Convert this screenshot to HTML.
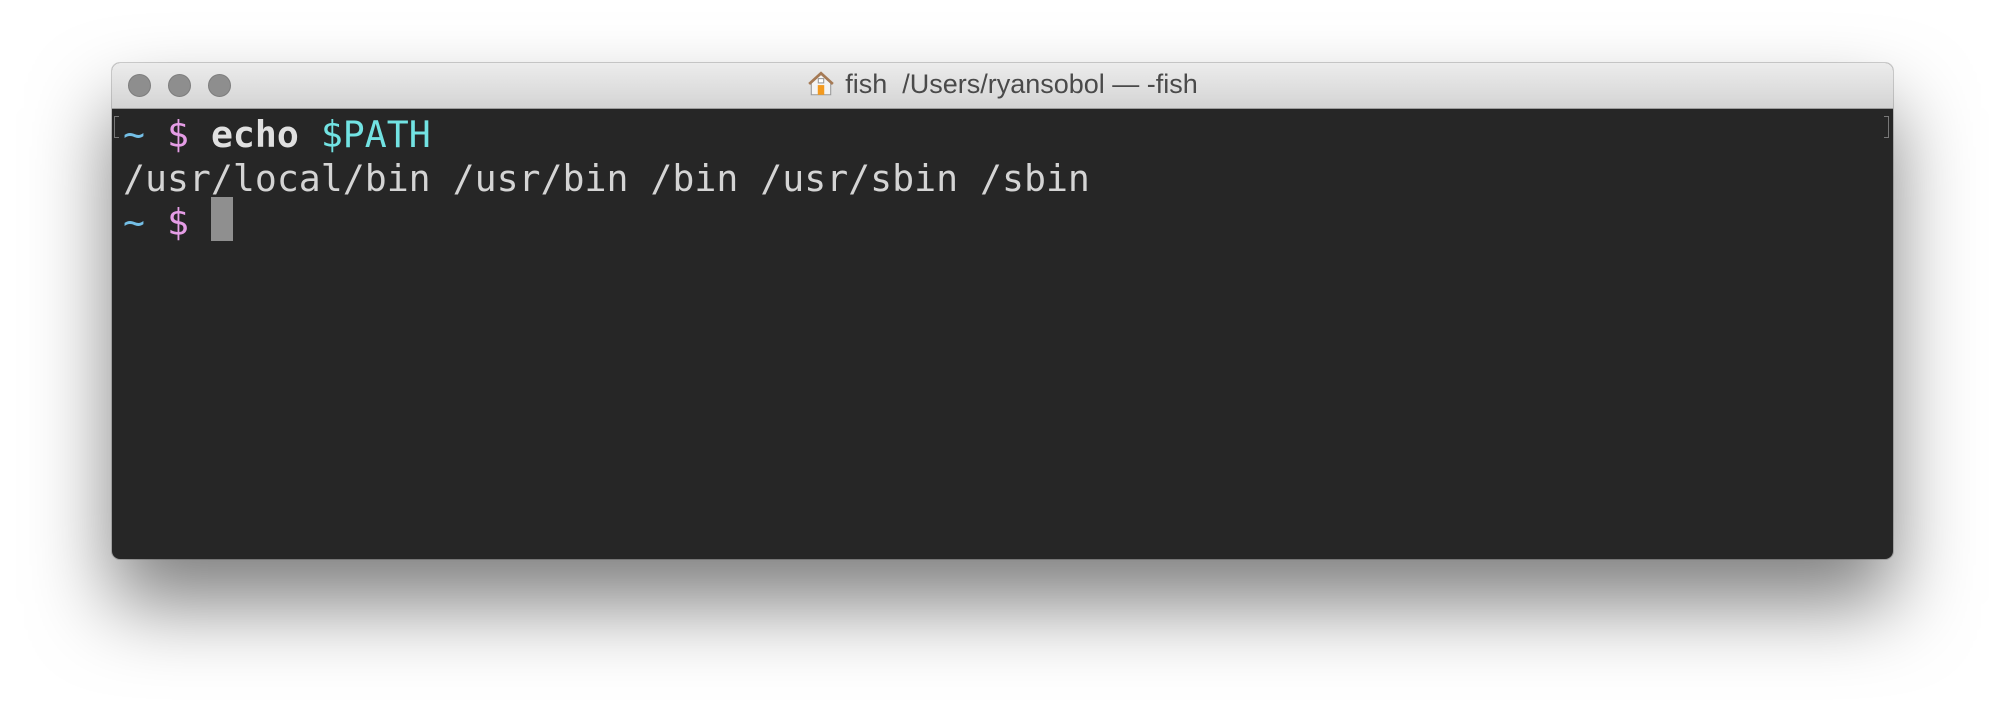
<!DOCTYPE html>
<html><head><meta charset="utf-8"><style>
html,body{margin:0;padding:0;background:#fff;width:2004px;height:720px;overflow:hidden}
.win{position:absolute;left:112px;top:63px;width:1781px;height:496px;border-radius:8px;background:#262626;box-shadow:0 45px 80px rgba(0,0,0,.5),0 0 0 1px rgba(0,0,0,.18);overflow:hidden}
.tb{position:absolute;left:0;top:0;right:0;height:45px;background:linear-gradient(#ececec,#d4d4d4);border-bottom:1px solid #9c9c9c}
.dot{position:absolute;top:11px;width:23px;height:23px;border-radius:50%;background:#8e8e8e;border:1px solid #7d7d7d;box-sizing:border-box}
.title{position:absolute;left:0;right:0;top:6px;text-align:center;font:27px "Liberation Sans",sans-serif;color:#4a4a4a;white-space:pre}
.title svg{vertical-align:-4px;margin-right:10px}
.term{position:absolute;left:11px;top:50px;font:36.5px/44px "DejaVu Sans Mono","Liberation Mono",monospace;color:#d4d4d4;white-space:pre}
.b{color:#74bfe6}.p{color:#e59de6}.c{color:#72e3e3}.w{font-weight:bold;color:#e0e0e0}
.cur{display:inline-block;width:22px;height:44px;background:#8f8f8f;vertical-align:top;margin-top:-4px}
.br{position:absolute;top:53px;width:5px;height:22px;border:1.5px solid #777;box-sizing:border-box}
</style></head><body>
<div class="win">
<div class="tb">
<div class="dot" style="left:16px"></div><div class="dot" style="left:56px"></div><div class="dot" style="left:96px"></div>
<div class="title"><svg width="28" height="26" viewBox="0 0 26 24"><path d="M4 11 L13 3 L22 11 V22 H4 Z" fill="#f4f4f4" stroke="#999" stroke-width="1"/><path d="M2 12 L13 2 L24 12" fill="none" stroke="#a57a55" stroke-width="2.5"/><rect x="10" y="13" width="6" height="9" fill="#f39a1f"/><rect x="10.5" y="7" width="5" height="4" fill="#fff" stroke="#999" stroke-width="1"/></svg>fish  /Users/ryansobol — -fish</div>
</div>
<div class="br" style="left:2px;border-right:none"></div>
<div class="br" style="right:4px;border-left:none"></div>
<div class="term"><span class="b">~</span> <span class="p">$</span> <span class="w">echo</span> <span class="c">$PATH</span>
/usr/local/bin /usr/bin /bin /usr/sbin /sbin
<span class="b">~</span> <span class="p">$</span> <span class="cur"></span></div>
</div>
</body></html>
